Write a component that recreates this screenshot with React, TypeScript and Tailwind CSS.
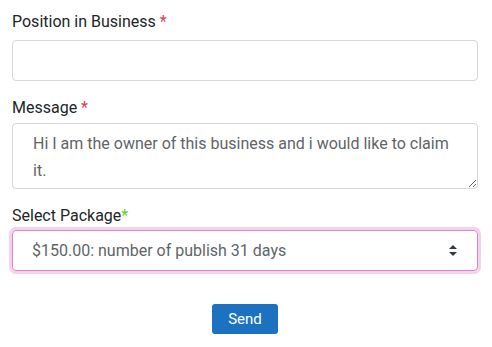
import React from "react";

export default function App() {
  return (
    <div className="w-[492px] h-[347px] bg-white pl-3 pr-[14px] pt-[12px] font-['Roboto',sans-serif] text-[16px] text-[#212529]">
      <form className="flex flex-col" onSubmit={(e) => e.preventDefault()}>
        <label className="leading-[20px] mb-[8px]">
          Position in Business <span className="text-[#e53950]">*</span>
        </label>
        <input
          type="text"
          className="h-[41px] w-full rounded-[4px] border border-[#d4d7db] px-5 outline-none"
        />

        <label className="leading-[20px] mt-[17px] mb-[5px]">
          Message <span className="text-[#e53950]">*</span>
        </label>
        <textarea
          defaultValue="Hi I am the owner of this business and i would like to claim it."
          className="h-[66px] w-full rounded-[4px] border border-[#d4d7db] pl-[20px] pr-4 pt-[6px] leading-[27px] text-[#606468] outline-none"
        />

        <label className="leading-[20px] mt-[17px] mb-[4px]">
          Select Package<span className="text-[#5fd12b]">*</span>
        </label>
        <div className="relative">
          <select
            defaultValue="150"
            className="h-[41px] w-full appearance-none rounded-[4px] border border-[#e77fd0] pl-[19px] text-[#606468] outline-none shadow-[0_0_0_3px_#f3d2ee]"
          >
            <option value="150">$150.00: number of publish 31 days</option>
          </select>
          <svg
            className="pointer-events-none absolute right-[21px] top-[15px]"
            width="8"
            height="11"
            viewBox="0 0 8 11"
          >
            <path d="M4 0L8 4H0Z" fill="#343a40" />
            <path d="M4 11L0 7H8Z" fill="#343a40" />
          </svg>
        </div>

        <div className="flex justify-center mt-[33px]">
          <button
            type="submit"
            className="h-[30px] w-[66px] rounded-[3px] bg-[#1c72c0] text-[15px] text-white"
          >
            Send
          </button>
        </div>
      </form>
    </div>
  );
}
